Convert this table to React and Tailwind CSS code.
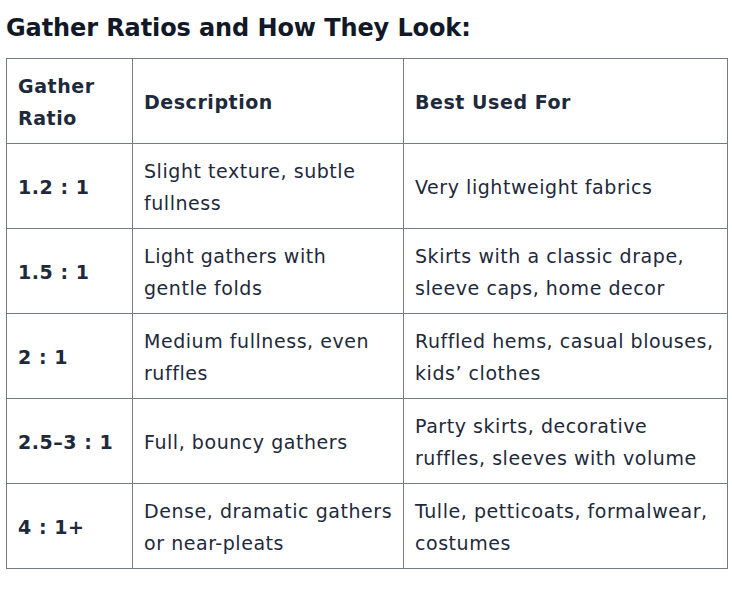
import React from "react";

const rows = [
  ["1.2 : 1", "Slight texture, subtle fullness", "Very lightweight fabrics"],
  ["1.5 : 1", "Light gathers with gentle folds", "Skirts with a classic drape, sleeve caps, home decor"],
  ["2 : 1", "Medium fullness, even ruffles", "Ruffled hems, casual blouses, kids’ clothes"],
  ["2.5–3 : 1", "Full, bouncy gathers", "Party skirts, decorative ruffles, sleeves with volume"],
  ["4 : 1+", "Dense, dramatic gathers or near-pleats", "Tulle, petticoats, formalwear, costumes"],
];

export default function App() {
  return (
    <div className="bg-white min-h-[590px] px-[6px] pt-[12px] font-['DejaVu_Sans',Verdana,sans-serif] text-[#1e293b]">
      <h2 className="text-[24px] leading-[32px] font-bold text-[#111827] mb-[14px] tracking-[-0.1px]">
        Gather Ratios and How They Look:
      </h2>
      <table className="border-collapse w-[721px] text-[19px] leading-[32px] tracking-[0.55px] table-fixed">
        <colgroup>
          <col className="w-[126px]" />
          <col className="w-[271px]" />
          <col className="w-[324px]" />
        </colgroup>
        <thead>
          <tr className="h-[85px]">
            <th className="border border-[#737b87] pl-[11px] pr-[8px] pt-[2px] text-left font-bold align-middle">Gather Ratio</th>
            <th className="border border-[#737b87] pl-[11px] pr-[8px] pt-[2px] text-left font-bold align-middle">Description</th>
            <th className="border border-[#737b87] pl-[11px] pr-[8px] pt-[2px] text-left font-bold align-middle">Best Used For</th>
          </tr>
        </thead>
        <tbody>
          {rows.map((r) => (
            <tr key={r[0]} className="h-[85px]">
              <td className="border border-[#737b87] pl-[11px] pr-[8px] pt-[2px] font-bold align-middle">{r[0]}</td>
              <td className="border border-[#737b87] pl-[11px] pr-[8px] pt-[2px] align-middle">{r[1]}</td>
              <td className="border border-[#737b87] pl-[11px] pr-[8px] pt-[2px] align-middle">{r[2]}</td>
            </tr>
          ))}
        </tbody>
      </table>
    </div>
  );
}
